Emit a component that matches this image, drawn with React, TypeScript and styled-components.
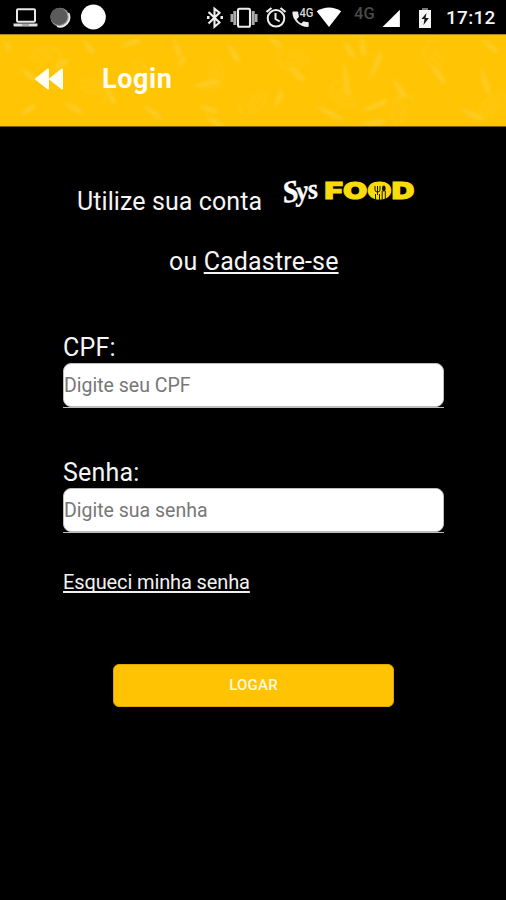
import React from "react";
import styled, { createGlobalStyle } from "styled-components";

const GlobalStyle = createGlobalStyle`
  * { box-sizing: border-box; }
  body { margin: 0; background: #000; }
`;

const Screen = styled.div`
  width: 506px;
  height: 900px;
  display: flex;
  flex-direction: column;
  overflow: hidden;
  background: #000;
  color: #fff;
  font-family: Roboto, sans-serif;
`;

const StatusBar = styled.div`
  height: 34px;
  flex: none;
  display: flex;
  align-items: flex-start;
  padding-left: 13px;
`;

const Glyph = styled.svg<{ $gap?: number }>`
  display: block;
  flex: none;
  height: 34px;
  margin-left: ${(p) => p.$gap ?? 0}px;
`;

const Network = styled.span`
  width: 22px;
  margin-left: 12px;
  padding-top: 6px;
  font-size: 16.5px;
  line-height: 16px;
  font-weight: 500;
  color: #4a4a4a;
`;

const Clock = styled.time`
  margin-left: 14px;
  padding-top: 6px;
  font-size: 19px;
  line-height: 24px;
  font-weight: 500;
  letter-spacing: 0.3px;
  color: #f4f4f4;
`;

const Header = styled.header`
  height: 93px;
  flex: none;
  display: grid;
  background: #ffc404;
  border-top: 1px solid #a98620;
  border-bottom: 1px solid #775c08;
`;

const Pattern = styled.svg`
  grid-area: 1 / 1;
  display: block;
`;

const TitleRow = styled.div`
  grid-area: 1 / 1;
  display: flex;
  align-items: center;
  padding-left: 34px;
  padding-bottom: 3px;
  z-index: 1;
`;

const BackButton = styled.button`
  width: 31px;
  height: 24px;
  padding: 0;
  border: 0;
  background: none;
  svg { display: block; }
`;

const Title = styled.h1`
  margin: 0 0 0 37px;
  font-size: 27px;
  line-height: 32px;
  font-weight: 700;
  letter-spacing: 0.6px;
  color: #fffdf2;
`;

const Content = styled.main`
  display: flex;
  flex-direction: column;
  padding: 45px 62px 0 63px;
`;

const Intro = styled.div`
  height: 60px;
  display: flex;
  padding-left: 14px;
  font-size: 25px;
  line-height: 30px;
  letter-spacing: 0.08px;
  color: #f5f5f5;
  span { width: 204px; padding-top: 15px; }
`;

const Register = styled.p`
  height: 30px;
  margin: 15px 0 56px 106px;
  font-size: 25px;
  line-height: 30px;
  letter-spacing: 0.15px;
  color: #f5f5f5;
`;

const Link = styled.a`
  text-decoration: underline;
  text-decoration-thickness: 1.5px;
  text-underline-offset: 2px;
  text-decoration-skip-ink: none;
`;

const Field = styled.label`
  display: block;
  height: 125px;
  font-size: 25px;
  line-height: 30px;
  letter-spacing: 0.2px;
  color: #f5f5f5;
`;

const InputFrame = styled.div`
  height: 45px;
  border-bottom: 1px solid #bbb;
`;

const Input = styled.input`
  display: block;
  width: 381px;
  height: 44px;
  padding: 0;
  border: 1px solid #bdbdbd;
  border-radius: 8px;
  outline: none;
  background: #fff;
  font: 19.5px/24px Roboto, sans-serif;
  letter-spacing: 0;
  &::placeholder { color: #777; opacity: 1; }
`;

const Forgot = styled(Link)`
  align-self: flex-start;
  margin-top: -13px;
  font-size: 20px;
  line-height: 24px;
  letter-spacing: -0.12px;
  text-underline-offset: 2px;
  color: #f2f2f2;
`;

const Submit = styled.button`
  width: 281px;
  height: 43px;
  margin: 70px 0 0 50px;
  padding: 0 0 1px;
  border: 1px solid #dba700;
  border-radius: 6px;
  background: #ffc303;
  color: #fff9e0;
  font: 500 15px/20px Roboto, sans-serif;
  letter-spacing: 0.2px;
`;

const flecks: [number, number, number, number][] = [
  [6, 10, 65, 13], [28, 40, 40, 18], [60, 31, -30, 20], [88, 12, 55, 18], [130, 9, -15, 22],
  [176, 12, 70, 20], [232, 17, 60, 24], [205, 50, -10, 28], [208, 75, 20, 20], [182, 28, -60, 12],
  [274, 7, 40, 18], [296, 39, 45, 22], [345, 43, 85, 34], [348, 14, 60, 20], [362, 10, 85, 22],
  [376, 32, -65, 32], [398, 53, 60, 24], [437, 39, 55, 24], [484, 45, 75, 28], [489, 11, 40, 22],
  [328, 78, 28, 30], [374, 72, -20, 30], [470, 79, 27, 28], [279, 65, -65, 20], [72, 73, 30, 22],
  [28, 76, -30, 18], [110, 60, 70, 20], [151, 77, 40, 24], [214, 87, 35, 22], [371, 89, -5, 28],
];

const swirls: [number, number][] = [
  [45, 22], [92, 55], [140, 41], [213, 39], [254, 67], [294, 24], [345, 60], [436, 22], [402, 76], [493, 72],
];

function LeafPattern() {
  return (
    <Pattern width="506" height="91" viewBox="0 0 506 91" fill="none">
      <defs>
        <filter id="soft" x="0" y="0" width="100%" height="100%">
          <feGaussianBlur stdDeviation="1.6" />
        </filter>
      </defs>
      <g filter="url(#soft)" opacity=".8">
        {flecks.map(([x, y, angle, length], i) => (
          <path
            key={i}
            transform={`translate(${x} ${y}) rotate(${angle})`}
            d={`M${-length / 2} 0Q0-5 ${length / 2}-3Q${length / 2 + 2} 5 ${-length / 2} 0`}
            fill="#ffdc61" opacity=".42"
          />
        ))}
        {swirls.map(([x, y], i) => (
          <g key={i} transform={`translate(${x} ${y}) rotate(${i * 37})`} stroke="#ffdc61" strokeWidth="2" opacity=".28">
            <path d="M-15 3Q-9-12 8-10Q20-5 14 7M-10 5Q-3-7 9-4M-5 7Q0-1 8 2" />
          </g>
        ))}
      </g>
    </Pattern>
  );
}

function StatusIcons() {
  return (
    <>
      <Glyph width="25" viewBox="0 0 25 34" fill="none">
        <rect x="4" y="9.2" width="18" height="12.6" rx="1" stroke="#e8e8e8" strokeWidth="2" />
        <path d="M.5 23.5h24v2q0 1-1 1h-22q-1 0-1-1z" fill="#dedede" />
        <path d="M9 25h7" stroke="#777" />
      </Glyph>
      <Glyph $gap={11} width="22" viewBox="0 0 22 34">
        <circle cx="11" cy="17.3" r="9.5" fill="#999" />
        <path d="M19.5 13A9.5 9.5 0 0 1 8 26.2" fill="none" stroke="#eee" strokeWidth="1.7" />
        <circle cx="10" cy="16.5" r="8.5" fill="#5b5b5b" />
      </Glyph>
      <Glyph $gap={9} width="27" viewBox="0 0 27 34">
        <circle cx="13.4" cy="17" r="12.4" fill="#fff" />
      </Glyph>
      <Glyph $gap={99} width="18" viewBox="0 0 18 34" fill="none" stroke="#eee" strokeWidth="2.1">
        <path d="M2.5 12l11 10.5-5 4.2V8.8l5 4-11 10.7" />
        <path d="M1 17.5h2.5M14.5 17.5H17" strokeWidth="2.8" />
      </Glyph>
      <Glyph $gap={6} width="28" viewBox="0 0 28 34" fill="none">
        <rect x="8" y="8.8" width="12" height="18" rx="1.5" stroke="#eee" strokeWidth="2.1" />
        <path d="M4.8 11v14M23.2 11v14" stroke="#aaa" strokeWidth="3" />
        <path d="M1.8 14v8M26.2 14v8" stroke="#aaa" strokeWidth="2.6" />
      </Glyph>
      <Glyph $gap={7} width="22" viewBox="0 0 22 34" fill="none" stroke="#eee" strokeWidth="2">
        <circle cx="11" cy="18.3" r="8.3" />
        <path d="M10.5 13v6l4.2 2.5" />
        <path d="M1.5 12l5-4M20.5 12l-5-4" strokeWidth="2.2" />
      </Glyph>
      <Glyph $gap={5} width="24" viewBox="0 0 24 34">
        <path
          d="M1.3 11.6h4q.8 0 .9 1 .1 2 .7 3.5.2.8-.4 1.3l-1.8 1.8q1.8 3.1 4.5 4.3l1.8-1.8q.6-.5 1.3-.3 1.8.6 3.4.7 1 .1 1 1v3q0 1-1 1C7.5 27.1.4 20 .4 12.6q0-1 .9-1z"
          fill="#eee"
        />
        <text x="7.5" y="17.3" fill="#d4d4d4" fontFamily="Roboto, sans-serif" fontSize="12.5" fontWeight="500" textLength="14" lengthAdjust="spacingAndGlyphs">4G</text>
      </Glyph>
      <Glyph width="26" viewBox="0 0 26 34">
        <path d="M.7 11.2Q13 3.7 25.2 11.2L13 27z" fill="#fff" />
      </Glyph>
      <Network>4G</Network>
      <Glyph $gap={5} width="20" viewBox="0 0 20 34">
        <path d="M1.5 27L18.9 9.7V27z" fill="#fff" />
      </Glyph>
      <Glyph $gap={17} width="14" viewBox="0 0 14 34">
        <path d="M4 8h6v3H4z" fill="#777" />
        <path d="M1 10h12v18H1z" fill="#f5f5f5" />
        <path d="M8.5 13l-5 6h3l-1 6 5.3-7H7.5z" fill="#111" />
      </Glyph>
    </>
  );
}

const LogoMark = styled.svg`
  display: block;
  flex: none;
  overflow: visible;
`;

function Logo() {
  return (
    <LogoMark width="136" height="40" viewBox="0 0 136 40" role="img" aria-label="Sys Food">
      <text
        transform="translate(3 31) rotate(-9) scale(.94 1)" fontFamily="Liberation Serif, serif"
        fontWeight="700" fontStyle="italic" fill="#fff" stroke="#fff" strokeWidth=".4" fontSize="31"
      >
        S<tspan dx="-2.5" fontSize="28">y</tspan><tspan dx="-.5" fontSize="28">s</tspan>
      </text>
      <text
        x="43.5" y="27.2" fontFamily="Inter, sans-serif" fontWeight="900" fontSize="23.5"
        fill="#fbdc0b" stroke="#fbdc0b" strokeWidth="1" textLength="90" lengthAdjust="spacingAndGlyphs"
      >FOOD</text>
      <ellipse cx="98.5" cy="18.5" rx="8.5" ry="8" fill="#fbdc0b" />
      <g fill="none" stroke="#171300">
        <path d="M94 14v4q0 2 2.5 2t2.5-2v-4M96.5 14v9" strokeWidth="1" />
        <path d="M94.5 22v7M98.5 22v7M101.2 19v10M104.3 19v8" strokeWidth="1" />
      </g>
      <ellipse cx="102.8" cy="16.5" rx="1.8" ry="3" fill="#171300" />
    </LogoMark>
  );
}

export default function App() {
  return (
    <>
      <GlobalStyle />
      <Screen>
        <StatusBar>
          <StatusIcons />
          <Clock>17:12</Clock>
        </StatusBar>
        <Header>
          <LeafPattern />
          <TitleRow>
            <BackButton aria-label="Voltar">
              <svg width="31" height="24" viewBox="0 0 31 24" fill="#fffdf2" stroke="#fffdf2" strokeWidth="2" strokeLinejoin="round">
                <path d="M14 2.5v19L2 12zM28 2.5v19L16 12z" />
              </svg>
            </BackButton>
            <Title>Login</Title>
          </TitleRow>
        </Header>
        <Content>
          <Intro><span>Utilize sua conta</span><Logo /></Intro>
          <Register>ou <Link>Cadastre-se</Link></Register>
          <Field>
            CPF:
            <InputFrame><Input placeholder="Digite seu CPF" /></InputFrame>
          </Field>
          <Field>
            Senha:
            <InputFrame><Input type="password" placeholder="Digite sua senha" /></InputFrame>
          </Field>
          <Forgot>Esqueci minha senha</Forgot>
          <Submit>LOGAR</Submit>
        </Content>
      </Screen>
    </>
  );
}
